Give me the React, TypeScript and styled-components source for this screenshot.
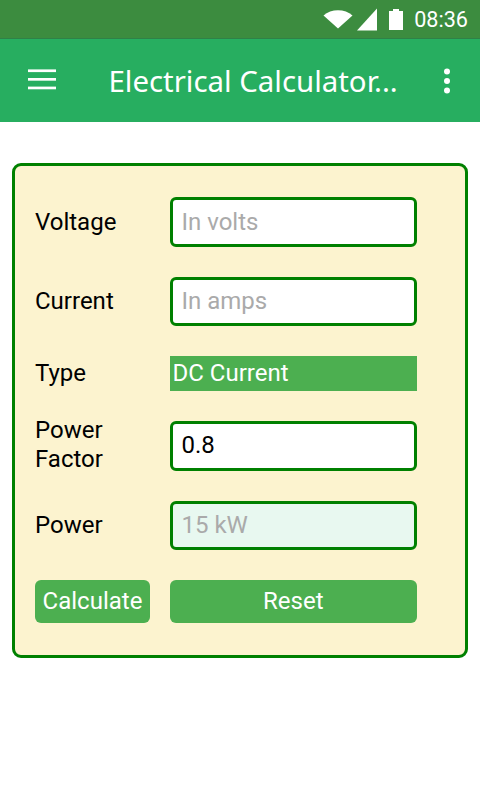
import React from "react";
import styled, { createGlobalStyle } from "styled-components";

const Global = createGlobalStyle`
  html, body { margin: 0; padding: 0; background: #fff; }
  body { font-family: Roboto, "Liberation Sans", sans-serif; }
  input::placeholder { color: #aaaaaa; opacity: 1; }
`;

const Screen = styled.div`
  width: 480px;
  height: 800px;
  display: flex;
  flex-direction: column;
  overflow: hidden;
`;

const StatusBar = styled.div`
  height: 38px;
  background: #3c8c3f;
  border-bottom: 1px solid #2f8147;
  display: flex;
  align-items: center;
  justify-content: flex-end;
  padding-right: 12px;
  color: #fff;
  font-size: 21.6px;
`;

const StatusIcon = styled.svg`
  display: block;
  flex: none;
`;

const Clock = styled.span`
  margin-left: 11px;
`;

const AppBar = styled.header`
  height: 83px;
  background: #27ae60;
  display: flex;
  align-items: center;
  color: #fff;
`;

const MenuButton = styled.div`
  width: 108.5px;
  padding-left: 28px;
  padding-bottom: 2px;
  box-sizing: border-box;
  display: flex;
`;

const Title = styled.h1`
  margin: 0;
  flex: 1;
  font-family: "Noto Sans", sans-serif;
  font-weight: 400;
  font-size: 29.4px;
  white-space: nowrap;
`;

const MoreButton = styled.div`
  width: 67px;
  display: flex;
  justify-content: center;
`;

const Card = styled.main`
  margin: 41px 12px 0;
  height: 495px;
  box-sizing: border-box;
  border: 3px solid #008000;
  border-radius: 9px;
  background: #fcf3cf;
  padding: 31px 0 0 20px;
  display: grid;
  grid-template-columns: 115px 247.5px;
  column-gap: 19.5px;
  row-gap: 30px;
  grid-template-rows: 49.5px 49.5px 35px 49.5px 49.5px 43px;
  align-items: center;
`;

const Label = styled.label<{ $raise?: number; $drop?: number }>`
  font-size: 24px;
  line-height: 29px;
  color: #000;
  padding-top: ${(p) => p.$drop ?? 0}px;
  padding-bottom: ${(p) => p.$raise ?? 0}px;
`;

const Field = styled.input<{ $computed?: boolean; $raise?: number }>`
  box-sizing: border-box;
  width: 100%;
  height: 100%;
  border: 3px solid #008000;
  border-radius: 6px;
  padding: 0 9px ${(p) => p.$raise ?? 0}px;
  outline: none;
  font-family: Roboto, sans-serif;
  font-size: 24px;
  color: #000;
  background: ${(p) => (p.$computed ? "#e8f8f0" : "#fff")};
`;

const TypeSelect = styled.div`
  height: 100%;
  box-sizing: border-box;
  background: #4caf50;
  color: #fff;
  font-size: 24px;
  display: flex;
  align-items: center;
  padding: 0 0 2px 3px;
`;

const ActionButton = styled.button`
  height: 100%;
  border: none;
  border-radius: 6px;
  background: #4caf50;
  color: #fff;
  font-family: Roboto, sans-serif;
  font-size: 24px;
  padding: 0 0 2px;
  white-space: nowrap;
`;

export default function App() {
  return (
    <Screen>
      <Global />
      <StatusBar>
        <StatusIcon width="30" height="20" viewBox="0 0 30 20">
          <path d="M0.5 6.5 C8 -0.5 22 -0.5 29.5 6.5 L15 19.5 Z" fill="#fff" />
        </StatusIcon>
        <StatusIcon width="20" height="23" viewBox="0 0 20 23" style={{ marginLeft: 4 }}>
          <path d="M20 0.5 V22.5 H0 Z" fill="#fff" />
        </StatusIcon>
        <StatusIcon width="14" height="21" viewBox="0 0 14 21" style={{ marginLeft: 12 }}>
          <path d="M4 0 H10 V2 H14 V21 H0 V2 H4 Z" fill="#fff" />
        </StatusIcon>
        <Clock>08:36</Clock>
      </StatusBar>
      <AppBar>
        <MenuButton>
          <svg width="28" height="21" viewBox="0 0 28 21">
            <rect x="0" y="0.4" width="28" height="2.7" fill="#fff" />
            <rect x="0" y="9" width="28" height="2.7" fill="#fff" />
            <rect x="0" y="17.6" width="28" height="2.7" fill="#fff" />
          </svg>
        </MenuButton>
        <Title>Electrical Calculator...</Title>
        <MoreButton>
          <svg width="12" height="26" viewBox="0 0 12 26">
            <circle cx="6" cy="3.5" r="3" fill="#fff" />
            <circle cx="6" cy="13" r="3" fill="#fff" />
            <circle cx="6" cy="22.5" r="3" fill="#fff" />
          </svg>
        </MoreButton>
      </AppBar>
      <Card>
        <Label $drop={2}>Voltage</Label>
        <Field placeholder="In volts" />
        <Label>Current</Label>
        <Field placeholder="In amps" />
        <Label>Type</Label>
        <TypeSelect>DC Current</TypeSelect>
        <Label $raise={2}>Power Factor</Label>
        <Field $raise={2} defaultValue="0.8" />
        <Label>Power</Label>
        <Field $computed placeholder="15 kW" readOnly />
        <ActionButton>Calculate</ActionButton>
        <ActionButton>Reset</ActionButton>
      </Card>
    </Screen>
  );
}
